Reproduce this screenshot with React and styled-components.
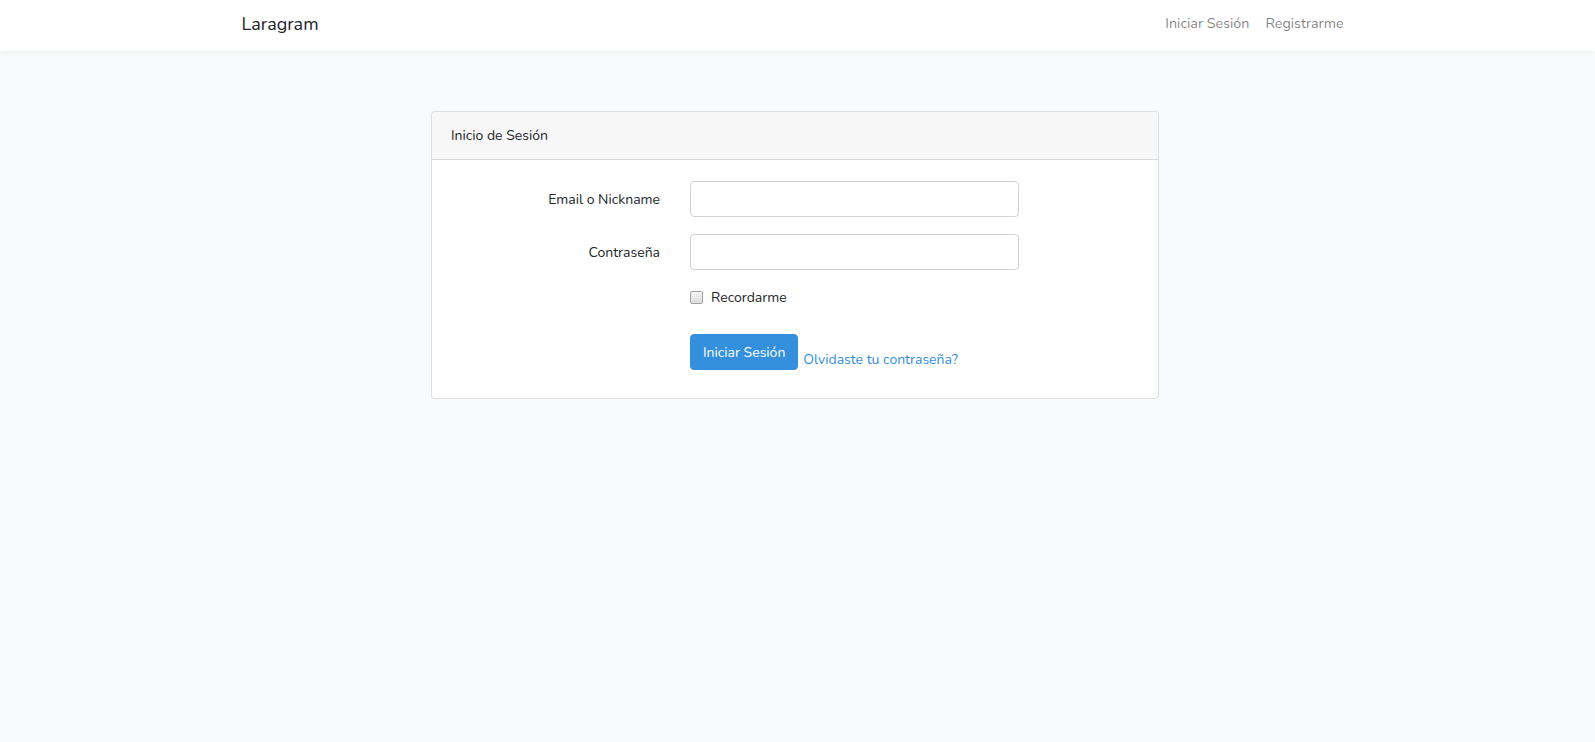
import React from 'react'
import styled, { createGlobalStyle } from 'styled-components'

const GlobalStyle = createGlobalStyle`
  html, body {
    margin: 0;
    padding: 0;
    background: #f8fafc;
    font-family: Nunito, Lato, "Noto Sans", sans-serif;
    font-size: 14px;
    color: #212529;
  }
  * { box-sizing: border-box; }
`

const Page = styled.div`
  min-height: 742px;
  background: #f8fafc;
`

const NavBar = styled.nav`
  height: 51px;
  padding-bottom: 4px;
  background: #fff;
  box-shadow: 0 2px 4px rgba(0, 0, 0, 0.04);
  display: flex;
  align-items: center;
`

const NavInner = styled.div`
  width: 1140px;
  margin: 0 auto;
  padding: 0 24px 0 14px;
  display: flex;
  align-items: center;
  justify-content: space-between;
`

const Brand = styled.a`
  font-size: 18px;
  color: #212529;
  text-decoration: none;
`

const NavLinks = styled.div`
  display: flex;
  gap: 16px;
`

const NavLink = styled.a`
  color: rgba(0, 0, 0, 0.5);
  font-size: 14.3px;
  text-decoration: none;
`

const Main = styled.main`
  padding-top: 60px;
  display: flex;
  justify-content: center;
`

const Card = styled.div`
  width: 728px;
  margin-left: -5px;
  background: #fff;
  border: 1px solid rgba(0, 0, 0, 0.125);
  border-radius: 4px;
`

const CardHeader = styled.div`
  height: 48px;
  padding: 0 19px;
  display: flex;
  align-items: center;
  background: #f7f7f7;
  border-bottom: 1px solid rgba(0, 0, 0, 0.125);
  border-radius: 4px 4px 0 0;
`

const CardBody = styled.div`
  padding: 21px 20px 28px;
`

const FormRow = styled.div`
  display: grid;
  grid-template-columns: 208px 329px;
  column-gap: 30px;
  align-items: center;
  margin-bottom: ${(p) => p.mb ?? 17}px;
`

const Label = styled.label`
  text-align: right;
`

const Input = styled.input`
  height: 36px;
  width: 100%;
  border: 1px solid #ced4da;
  border-radius: 4px;
  padding: 0 12px;
  font: inherit;
  background: #fff;
`

const CheckLabel = styled.label`
  grid-column: 2;
  display: flex;
  align-items: center;
  gap: 8px;
  height: 20px;
`

const CheckBox = styled.input`
  appearance: none;
  margin: 0;
  width: 13px;
  height: 13px;
  border: 1px solid #a3a3a3;
  border-radius: 2px;
  background: linear-gradient(#f4f4f4, #dedede);
`

const Actions = styled.div`
  grid-column: 2;
  display: flex;
  align-items: flex-end;
  gap: 5px;
`

const Button = styled.button`
  height: 36px;
  padding: 0 12px;
  border: 1px solid #3490dc;
  border-radius: 4px;
  background: #3490dc;
  color: #fff;
  font: inherit;
  font-size: 14px;
  white-space: nowrap;
`

const Link = styled.a`
  color: #3490dc;
  text-decoration: none;
  line-height: 20px;
  white-space: nowrap;
`

export default function App() {
  return (
    <Page>
      <GlobalStyle />
      <NavBar>
        <NavInner>
          <Brand href="#">Laragram</Brand>
          <NavLinks>
            <NavLink href="#">Iniciar Sesión</NavLink>
            <NavLink href="#">Registrarme</NavLink>
          </NavLinks>
        </NavInner>
      </NavBar>
      <Main>
        <Card>
          <CardHeader>Inicio de Sesión</CardHeader>
          <CardBody>
            <FormRow>
              <Label htmlFor="email">Email o Nickname</Label>
              <Input id="email" type="text" />
            </FormRow>
            <FormRow>
              <Label htmlFor="password">Contraseña</Label>
              <Input id="password" type="password" />
            </FormRow>
            <FormRow mb={27}>
              <CheckLabel>
                <CheckBox type="checkbox" />
                Recordarme
              </CheckLabel>
            </FormRow>
            <FormRow mb={0}>
              <Actions>
                <Button type="submit">Iniciar Sesión</Button>
                <Link href="#">Olvidaste tu contraseña?</Link>
              </Actions>
            </FormRow>
          </CardBody>
        </Card>
      </Main>
    </Page>
  )
}
